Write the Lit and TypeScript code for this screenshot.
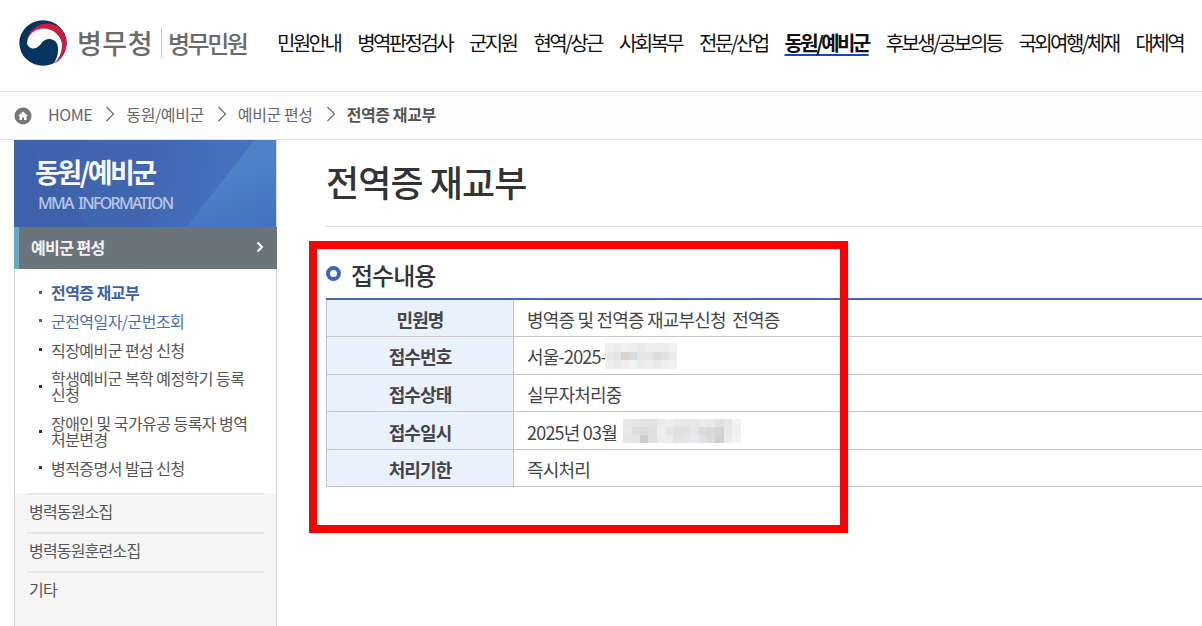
import { LitElement, html, css } from "lit";
import { customElement } from "lit/decorators.js";

const NAV = ["민원안내","병역판정검사","군지원","현역/상근","사회복무","전문/산업","동원/예비군","후보생/공보의등","국외여행/체재","대체역"];
const SUB = ["전역증 재교부","군전역일자/군번조회","직장예비군 편성 신청","학생예비군 복학 예정학기 등록 신청","장애인 및 국가유공 등록자 병역 처분변경","병적증명서 발급 신청"];
const OTHER = ["병력동원소집","병력동원훈련소집","기타"];
const P1 = [
  "#f0f0f0","#ededed","#f2f1ee","#f0efec","#e8ebee","#eeeeee","#ededed","#ededed","#f2f2f2",
  "#e9e9e9","#e3e3e3","#d8d4cd","#d6dbe0","#e5e5e5","#e4e4e4","#dddddd","#e2e2e2","#ebebeb",
  "#eeeeee","#ebebeb","#efefef","#f4f3f0","#ebecee","#eeeeee","#eaeaea","#efefef","#f1f1f1",
];
const P2 = [
  "#e6e6e6","#e5e5e5","#e3e3e3","#e1e1e1","#e9e9e9","#eeeeee","#e8e8e8","#e6e6e6","#ebe6e2","#e9ebee","#e9e9e9","#e0e0e0","#e6e6e6","#f0f0f0",
  "#e8e8e8","#dcdedd","#dadcdc","#dfdfdf","#eeeeee","#e5e5e5","#e4e2e0","#e4e2e0","#e3e6ea","#dcdcdc","#d8d8d8","#d3d3d3","#e8e8e8","#f0f0f0",
  "#e6e6e6","#e4e4e4","#c9cbce","#e0e0e0","#ecebe9","#ebebeb","#e4e3e1","#e6e6e6","#e8ebee","#e2e2e2","#dadada","#cfcfcf","#ececec","#f3f3f3",
];

@customElement("app-root")
export class AppRoot extends LitElement {
  static styles = css`
    :host { display: block; position: relative; width: 1202px; height: 626px; overflow: hidden; background: #fff;
      font-family: "Noto Sans CJK KR", "Noto Sans", sans-serif; color: #333; }
    header { height: 91px; border-bottom: 1px solid #e4e4e4; display: flex; align-items: center; box-sizing: content-box; }
    .logo { display: flex; align-items: center; margin-left: 19px; width: 258px; flex: none; margin-top: -6px; }
    .logo svg { flex: none; }
    .l1 { font-size: 27px; font-weight: 500; color: #6a6a6a; margin-left: 10px; letter-spacing: 0.5px; line-height: 32px; }
    .sep { width: 1px; height: 31px; background: #ccc; margin: 0 6px 0 8px; }
    .l2 { font-size: 24px; font-weight: 500; color: #6a6a6a; letter-spacing: -2.5px; line-height: 32px; }
    nav { display: flex; gap: 17px; font-size: 20px; letter-spacing: -2.6px; color: #111; white-space: nowrap; margin-top: -6px; }
    nav span { line-height: 28px; }
    nav .on { font-weight: 700; color: #111; text-decoration: underline; text-decoration-color: #1746b0; text-underline-offset: 3px; }
    .crumb { border-bottom: 1px solid #e6e6e6; background: #fdfdfd; display: flex; align-items: center; padding: 0 0 3px 14px; box-sizing: border-box; height: 48px; font-size: 16px; color: #666; letter-spacing: -0.4px; }
    .home { width: 18px; height: 18px; margin: 3px 16px 0 0; }
    .chev { margin: 0 11px 0 13px; flex: none; }
    .crumb b { font-weight: 700; color: #555; font-size: 16px; }
    .body { display: flex; }
    aside { width: 263px; margin-left: 14px; flex: none; height: 486px; box-sizing: border-box; border-right: 1px solid #d8d8d8; display: flex; flex-direction: column; }
    .hero { position: relative; height: 87px; padding: 15px 0 0 22px; box-sizing: border-box; color: #fff; overflow: hidden;
      background: linear-gradient(100deg, #3f64ae 0%, #4166b0 50%, #4470bd 75%, #4672bf 100%); }
    .hero::before { content: ""; position: absolute; inset: 0; background: linear-gradient(160deg, #4877bf, #4f82c7 60%, #4272be); clip-path: polygon(173px 87px, 240px 0, 263px 0, 263px 87px); }
    .hero::after { content: ""; position: absolute; inset: 0; background: #3d61ab; clip-path: polygon(0 0, 10px 0, 75px 87px, 0 87px); }
    .hero h2, .hero p { position: relative; z-index: 1; }
    .hero h2 { margin: 0 0 0 -1px; font-size: 27px; line-height: 34px; font-weight: 700; letter-spacing: -2.5px; color: #f8faff; }
    .hero p { margin: 3px 0 0 2px; font-size: 16px; line-height: 22px; font-weight: 500; letter-spacing: -1.7px; word-spacing: 3px; color: #b9c8e4; font-family: "Noto Sans", sans-serif; }
    .act { height: 42px; background: #6b747b; border-left: 5px solid #69a9c6; display: flex; align-items: center; justify-content: space-between; padding: 0 13px 2px 12px; box-sizing: border-box; color: #f4f4f4; font-size: 16px; font-weight: 700; letter-spacing: -0.6px; margin-right: -1px; }
    .subs { list-style: none; margin: 0; padding: 15px 10px 0 24px; border-left: 1px solid #d8d8d8; height: 224px; box-sizing: border-box; }
    .subs li { display: flex; align-items: center; font-size: 16px; line-height: 16px; letter-spacing: -0.55px; color: #555; margin-bottom: 12.8px; min-height: 16px; word-break: keep-all; }
    .subs li::before { content: ""; width: 3px; height: 3px; background: #333; flex: none; margin-right: 9px; }
    .subs li.a { color: #3c5fa8; font-weight: 700; }
    .subs li.a::before, .subs li.b::before { background: #3c5fa8; }
    .subs li.b { color: #4a6fb5; }
    .others { flex: 1; background: #f5f5f5; border-left: 1px solid #d8d8d8; display: flex; flex-direction: column; }
    .others div { margin: 0 12px; height: 37px; padding-left: 2px; box-sizing: content-box; border-top: 2px solid #e6e6e6; font-size: 16px; line-height: 33px; letter-spacing: -0.8px; color: #555; }
    main { flex: 1; padding: 16px 0 0 49px; min-width: 0; }
    h1 { margin: 0; font-size: 36px; line-height: 50px; font-weight: 500; letter-spacing: -0.9px; color: #333; height: 70px; border-bottom: 1px solid #ddd; box-sizing: content-box; }
    .sec { display: flex; align-items: center; height: 71px; padding-top: 23px; box-sizing: border-box; font-size: 24px; font-weight: 500; letter-spacing: -1px; color: #333; }
    .dot { width: 15px; height: 15px; border-radius: 50%; border: 4px solid #3d66c4; box-sizing: border-box; margin: 0 10px 2px 0; flex: none; }
    table { border-collapse: collapse; width: 100%; table-layout: fixed; border-top: 2px solid #4268b3; }
    th, td { height: 37.6px; padding: 2px 0 0; border-bottom: 1px solid #c6c6c6; font-size: 18px; box-sizing: border-box; letter-spacing: -0.8px; line-height: 24px; }
    th { width: 187px; background: #e9f1fc; border-left: 1px solid #c6c6c6; border-right: 1px solid #c6c6c6; font-weight: 700; color: #444; letter-spacing: -0.9px; }
    td { padding-left: 13px; color: #444; font-weight: 400; }
    .cell { display: flex; align-items: center; height: 24px; white-space: pre; }
    .pix { display: grid; grid-template-rows: repeat(3, 1fr); flex: none; height: 26px; margin: -1px 0 0; }
    .pix.p1 { grid-template-columns: repeat(9, 8px); margin-left: -1px; }
    .pix.p2 { grid-template-columns: repeat(14, 8.4px); margin-left: 3px; height: 24px; }
    .red { position: absolute; left: 309px; top: 241px; width: 539px; height: 292px; box-sizing: border-box; border: 8px solid #ff0000; pointer-events: none; }
  `;

  render() {
    const chev = html`<svg class="chev" width="10" height="16" viewBox="0 0 10 16"><path d="M1.5 1l7 7-7 7" fill="none" stroke="#666" stroke-width="1.1"/></svg>`;
    const pix = (cls: string, c: string[]) => html`<span class="pix ${cls}">${c.map((x) => html`<i style="background:${x}"></i>`)}</span>`;
    return html`
      <header>
        <div class="logo">
          <svg width="48" height="46" viewBox="0 0 48 46">
            <ellipse cx="24" cy="23" rx="23.700" ry="22.800" fill="#04345f"/>
            <path d="M7.500 22C9 11 18 3.500 28 3.500 40 3.500 47.500 13 47.500 23 47.500 32 42 40 35 44 41 38 44 31 43 23 42 13 33 8.500 25 8.500 17 8.500 10.500 14 7.500 22Z" fill="#d8183a"/>
            <path d="M8 23C9 14 16 8.500 25 8.500 34 8.500 42 15 43 24 43.500 32 40 39 34.500 44 38.500 38 40 31 38.500 25 37 19 29 17 24.500 21 21 24.500 19 28.500 14.500 28.500 11 28.500 8.500 26 8 23Z" fill="#fff"/>
          </svg>
          <span class="l1">병무청</span><span class="sep"></span><span class="l2">병무민원</span>
        </div>
        <nav>${NAV.map((n) => html`<span class=${n === "동원/예비군" ? "on" : ""}>${n}</span>`)}</nav>
      </header>
      <div class="crumb">
        <svg class="home" viewBox="0 0 18 18"><circle cx="9" cy="9" r="8.500" fill="#777"/><path d="M9 4.500L4 9h1.500v4h2.500v-2.500h2V13h2.500V9H14z" fill="#fff"/></svg>
        <span>HOME</span>${chev}<span>동원/예비군</span>${chev}<span>예비군 편성</span>${chev}<b>전역증 재교부</b>
      </div>
      <div class="body">
        <aside>
          <div class="hero"><h2>동원/예비군</h2><p>MMA INFORMATION</p></div>
          <div class="act"><span>예비군 편성</span>
            <svg width="8" height="12" viewBox="0 0 8 12"><path d="M1.500 1.500L6 6l-4.500 4.500" fill="none" stroke="#fff" stroke-width="2"/></svg>
          </div>
          <ul class="subs">${SUB.map((s, i) => html`<li class=${i === 0 ? "a" : i === 1 ? "b" : ""}><span>${s}</span></li>`)}</ul>
          <div class="others">${OTHER.map((o) => html`<div>${o}</div>`)}</div>
        </aside>
        <main>
          <h1>전역증 재교부</h1>
          <div class="sec"><span class="dot"></span>접수내용</div>
          <table>
            <tr><th>민원명</th><td>병역증 및 전역증 재교부신청&nbsp; 전역증</td></tr>
            <tr><th>접수번호</th><td><span class="cell">서울-2025-${pix("p1", P1)}</span></td></tr>
            <tr><th>접수상태</th><td>실무자처리중</td></tr>
            <tr><th>접수일시</th><td><span class="cell">2025년 03월 ${pix("p2", P2)}</span></td></tr>
            <tr><th>처리기한</th><td>즉시처리</td></tr>
          </table>
        </main>
      </div>
      <div class="red"></div>
    `;
  }
}
